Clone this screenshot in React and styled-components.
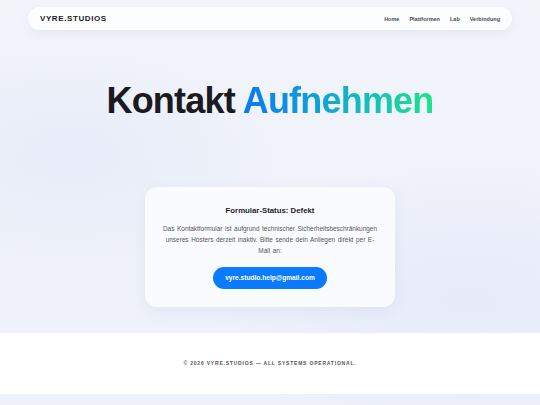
import React from 'react';
import styled, { createGlobalStyle } from 'styled-components';

const GlobalStyle = createGlobalStyle`
  html, body {
    margin: 0;
    padding: 0;
  }
  body {
    font-family: "Liberation Sans", Arial, sans-serif;
    background: #f1f3f9;
  }
`;

const Page = styled.div`
  min-height: 405px;
  padding-bottom: 11px;
  background:
    radial-gradient(ellipse 220px 120px at 70px 150px, rgba(225, 232, 248, 0.6), transparent),
    radial-gradient(ellipse 260px 140px at 470px 300px, rgba(228, 232, 250, 0.7), transparent),
    linear-gradient(180deg, #f2f4fa 0%, #eff2fa 60%, #eef1fa 100%);
  display: flex;
  flex-direction: column;
`;

const Nav = styled.nav`
  margin: 7px 28px 0;
  height: 23px;
  border-radius: 12px;
  background: rgba(252, 253, 255, 0.95);
  box-shadow: 0 3px 10px rgba(140, 155, 190, 0.12);
  display: flex;
  align-items: center;
  justify-content: space-between;
  padding: 0 12px;
`;

const Logo = styled.div`
  font-size: 8px;
  font-weight: 700;
  letter-spacing: 0.6px;
  color: #1c1c22;
`;

const Links = styled.div`
  display: flex;
  gap: 10px;
`;

const NavLink = styled.a`
  font-size: 5.5px;
  font-weight: 700;
  color: #4a4a52;
  text-decoration: none;
`;

const Hero = styled.h1`
  margin: 49px 0 0;
  text-align: center;
  font-size: 36px;
  line-height: 43px;
  font-weight: 700;
  letter-spacing: -0.8px;
  color: #1a1a1f;
`;

const Gradient = styled.span`
  background: linear-gradient(90deg, #0a78f6 0%, #12b3c9 55%, #1ee38a 100%);
  -webkit-background-clip: text;
  background-clip: text;
  color: transparent;
`;

const Card = styled.section`
  margin: 65px auto 0;
  width: 250px;
  box-sizing: border-box;
  padding: 19px 16px 18px;
  border-radius: 12px;
  background: rgba(251, 252, 255, 0.92);
  box-shadow: 0 4px 14px rgba(130, 145, 185, 0.12);
  display: flex;
  flex-direction: column;
  align-items: center;
  text-align: center;
`;

const CardTitle = styled.h2`
  margin: 0;
  font-size: 7.8px;
  line-height: 9px;
  font-weight: 700;
  color: #1e1e24;
`;

const Text = styled.p`
  margin: 8px 0 0;
  width: 217.5px;
  font-size: 6.45px;
  word-spacing: 0.8px;
  line-height: 11px;
  color: #55555c;
`;

const MailButton = styled.a`
  margin-top: 10.5px;
  height: 22px;
  padding: 0 12.5px;
  border-radius: 11px;
  background: #0a7bff;
  color: #fff;
  font-size: 6.6px;
  font-weight: 700;
  display: flex;
  align-items: center;
  text-decoration: none;
`;

const Footer = styled.footer`
  margin-top: 26px;
  height: 61px;
  background: #ffffff;
  display: flex;
  align-items: center;
  justify-content: center;
`;

const FooterText = styled.div`
  font-size: 5px;
  font-weight: 700;
  letter-spacing: 0.8px;
  color: #55555c;
`;

export default function App() {
  return (
    <>
      <GlobalStyle />
      <Page>
        <Nav>
          <Logo>VYRE.STUDIOS</Logo>
          <Links>
            <NavLink href="#">Home</NavLink>
            <NavLink href="#">Plattformen</NavLink>
            <NavLink href="#">Lab</NavLink>
            <NavLink href="#">Verbindung</NavLink>
          </Links>
        </Nav>
        <Hero>
          Kontakt <Gradient>Aufnehmen</Gradient>
        </Hero>
        <Card>
          <CardTitle>Formular-Status: Defekt</CardTitle>
          <Text>
            Das Kontaktformular ist aufgrund technischer Sicherheitsbeschränkungen
            unseres Hosters derzeit inaktiv. Bitte sende dein Anliegen direkt per
            E-Mail an:
          </Text>
          <MailButton href="mailto:vyre.studio.help@gmail.com">
            vyre.studio.help@gmail.com
          </MailButton>
        </Card>
        <Footer>
          <FooterText>© 2026 VYRE.STUDIOS — ALL SYSTEMS OPERATIONAL.</FooterText>
        </Footer>
      </Page>
    </>
  );
}
